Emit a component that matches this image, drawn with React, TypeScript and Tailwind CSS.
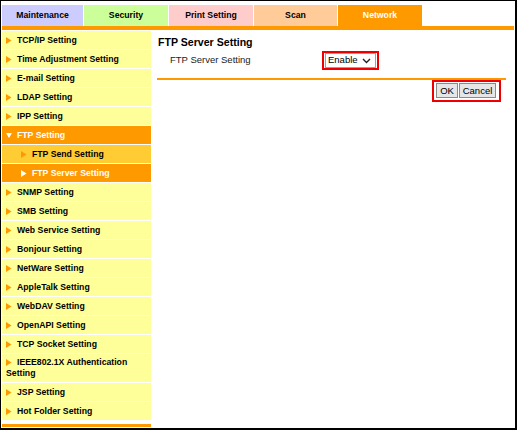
import React from 'react';

type Item = { label: React.ReactNode; level?: number; state?: 'open' | 'active' | 'sub' };

const tabs = [
  { name: 'Maintenance', bg: 'bg-[#ccccff]', w: 'w-[81px]', text: 'text-black' },
  { name: 'Security', bg: 'bg-[#ccff99]', w: 'w-[84px]', text: 'text-black' },
  { name: 'Print Setting', bg: 'bg-[#ffcccc]', w: 'w-[84px]', text: 'text-black' },
  { name: 'Scan', bg: 'bg-[#ffcc99]', w: 'w-[83px]', text: 'text-black' },
  { name: 'Network', bg: 'bg-[#ff9900]', w: 'w-[84px]', text: 'text-white' },
];

const menu: Item[] = [
  { label: 'TCP/IP Setting' },
  { label: 'Time Adjustment Setting' },
  { label: 'E-mail Setting' },
  { label: 'LDAP Setting' },
  { label: 'IPP Setting' },
  { label: 'FTP Setting', state: 'open' },
  { label: 'FTP Send Setting', level: 1, state: 'sub' },
  { label: 'FTP Server Setting', level: 1, state: 'active' },
  { label: 'SNMP Setting' },
  { label: 'SMB Setting' },
  { label: 'Web Service Setting' },
  { label: 'Bonjour Setting' },
  { label: 'NetWare Setting' },
  { label: 'AppleTalk Setting' },
  { label: 'WebDAV Setting' },
  { label: 'OpenAPI Setting' },
  { label: 'TCP Socket Setting' },
  { label: <>IEEE802.1X Authentication<br />Setting</> },
  { label: 'JSP Setting' },
  { label: 'Hot Folder Setting' },
];

// small triangle used as the menu bullet
function Arrow({ down, white }: { down?: boolean; white?: boolean }) {
  return (
    <svg width="6" height="7" viewBox="0 0 6 7" className="inline-block mr-[5px] align-[-0.5px]">
      {down ? (
        <polygon points="0,1 6,1 3,6" fill={white ? '#ffffff' : '#ff9900'} />
      ) : (
        <polygon points="0,0 5.5,3.5 0,7" fill={white ? '#ffffff' : '#ff9900'} />
      )}
    </svg>
  );
}

function MenuRow({ item }: { item: Item }) {
  const orange = item.state === 'open' || item.state === 'active';
  const bg = orange ? 'bg-[#ff9900]' : item.state === 'sub' ? 'bg-[#ffcc33]' : 'bg-[#ffff99]';
  const color = orange ? 'text-white' : 'text-black';
  const pad = item.level ? 'pl-[19px]' : 'pl-[4px]';
  const multi = typeof item.label !== 'string';
  return (
    <div
      className={`${bg} ${color} ${pad} border-b border-white font-bold text-[8.7px] ${
        multi ? 'py-[3px] leading-[11px]' : 'h-[19px] leading-[18px]'
      }`}
    >
      <Arrow down={item.state === 'open'} white={orange} />
      {item.label}
    </div>
  );
}

export default function App() {
  return (
    <div className="w-[517px] h-[430px] bg-white border-l border-t border-r-2 border-b-2 border-black overflow-hidden font-['Liberation_Sans',Arial,sans-serif]">
      <div className="pl-[1px] pt-[4px] pr-[1px] h-full flex flex-col">
        {/* tabs */}
        <div className="flex gap-[1px] h-[21px]">
          {tabs.map((t) => (
            <div
              key={t.name}
              className={`${t.bg} ${t.w} ${t.text} flex items-center justify-center font-bold text-[8.7px]`}
            >
              {t.name}
            </div>
          ))}
        </div>
        <div className="h-[4px] bg-[#ff9900]" />

        <div className="flex flex-1">
          {/* side menu */}
          <div className="w-[149px] flex flex-col pt-[1px]">
            {menu.map((m, i) => (
              <MenuRow key={i} item={m} />
            ))}
            <div className="h-[3px] bg-white" />
            <div className="h-[3px] bg-[#ff9900]" />
          </div>

          {/* content */}
          <div className="flex-1 pt-[4px]">
            <h1 className="pl-[7px] h-[16px] leading-[16px] font-bold text-[10.6px] text-black">FTP Server Setting</h1>
            <div className="flex items-center mt-[1px] pl-[19px]">
              <div className="w-[152px] text-[9.5px] text-[#222]">FTP Server Setting</div>
              <div className="border-2 border-[#ee0000] px-[1px] py-[0px]">
                <div className="w-[51px] h-[15px] border border-[#a0a0a0] bg-white flex items-center justify-between pl-[2px] pr-[4px] text-[9.5px] text-black">
                  <span>Enable</span>
                  <svg width="9" height="6" viewBox="0 0 9 6">
                    <polyline points="1,1 4.5,4.5 8,1" fill="none" stroke="#222" strokeWidth="1.4" />
                  </svg>
                </div>
              </div>
            </div>
            <div className="ml-[6px] mr-[8px] mt-[8px] h-[2px] bg-[#ff9900]" />
            <div className="flex justify-end mr-[13px]">
              <div className="border-2 border-[#ee0000] pl-[2px] pr-[3px] pt-[1px] pb-[2px] flex gap-[1px]">
                <button className="w-[22px] h-[15px] bg-[#e6e6e6] border border-[#8a8a8a] text-[9.5px] leading-[13px] text-black">
                  OK
                </button>
                <button className="w-[37px] h-[15px] bg-[#e6e6e6] border border-[#8a8a8a] text-[9.5px] leading-[13px] text-black">
                  Cancel
                </button>
              </div>
            </div>
          </div>
        </div>
      </div>
    </div>
  );
}
